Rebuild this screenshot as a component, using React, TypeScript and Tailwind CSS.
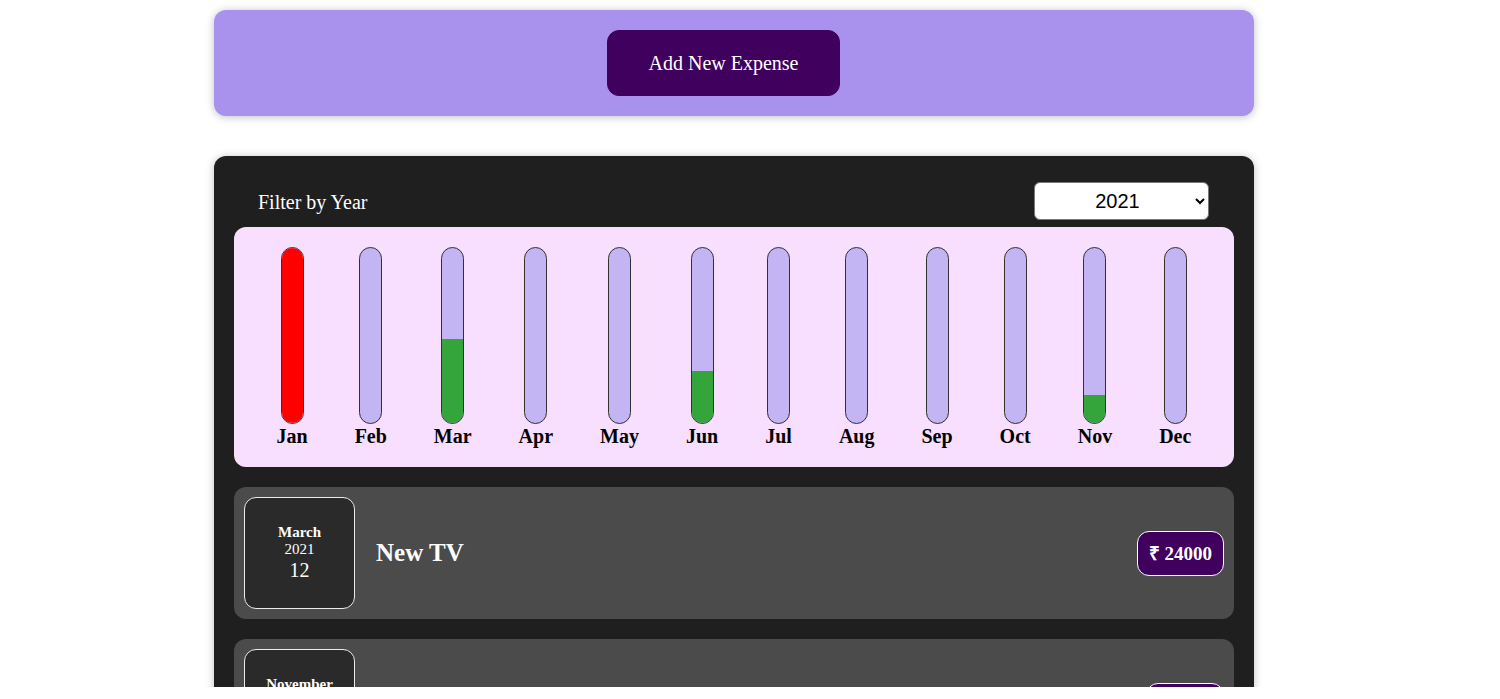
import React from 'react';

type Expense = {
  id: string;
  title: string;
  amount: number;
  month: string;
  year: number;
  day: string;
};

const MONTHS: { label: string; pct: number; over?: boolean }[] = [
  { label: 'Jan', pct: 100, over: true },
  { label: 'Feb', pct: 0 },
  { label: 'Mar', pct: 48 },
  { label: 'Apr', pct: 0 },
  { label: 'May', pct: 0 },
  { label: 'Jun', pct: 30 },
  { label: 'Jul', pct: 0 },
  { label: 'Aug', pct: 0 },
  { label: 'Sep', pct: 0 },
  { label: 'Oct', pct: 0 },
  { label: 'Nov', pct: 16 },
  { label: 'Dec', pct: 0 },
];

const EXPENSES: Expense[] = [
  { id: 'e1', title: 'New TV', amount: 24000, month: 'March', year: 2021, day: '12' },
  { id: 'e2', title: 'New Phone', amount: 8000, month: 'November', year: 2021, day: '05' },
];

function ChartBar({ label, pct, over }: { label: string; pct: number; over?: boolean }) {
  return (
    <div className="flex flex-col items-center">
      <div className="flex h-[177px] w-[23px] flex-col justify-end overflow-hidden rounded-[12px] border border-[#313131] bg-[#c3b4f3]">
        <div
          className={over ? 'w-full bg-[#ff0000]' : 'w-full bg-[#33a53a]'}
          style={{ height: `${pct}%` }}
        />
      </div>
      <span className="mt-[1px] text-[20px] font-bold leading-[22px] text-black">{label}</span>
    </div>
  );
}

function ExpenseItem({ e }: { e: Expense }) {
  return (
    <div className="flex items-center rounded-[12px] bg-[#4b4b4b] p-[10px]">
      <div className="flex h-[112px] w-[111px] shrink-0 flex-col items-center justify-center rounded-[12px] border border-[#ececec] bg-[#2a2a2a] text-white">
        <span className="text-[15px] font-bold leading-[17px]">{e.month}</span>
        <span className="text-[15px] leading-[17px]">{e.year}</span>
        <span className="text-[20px] leading-[24px]">{e.day}</span>
      </div>
      <div className="flex flex-1 items-center justify-between pl-[21px]">
        <h2 className="text-[25px] font-bold text-white">{e.title}</h2>
        <div className="rounded-[12px] border border-white bg-[#40005d] px-[11px] py-[10px] text-[19px] font-bold leading-[23px] text-white">
          ₹ {e.amount}
        </div>
      </div>
    </div>
  );
}

export default function App() {
  return (
    <div className="h-[687px] overflow-hidden bg-white font-['Liberation_Serif',serif]">
      <div className="ml-[214px] w-[1040px] pt-[10px]">
        <div className="flex h-[106px] items-center justify-center rounded-[12px] bg-[#a892ee] shadow-[0_1px_8px_rgba(0,0,0,0.25)]">
          <button
            type="button"
            className="mr-[21px] h-[66px] w-[233px] rounded-[12px] border border-[#40005d] bg-[#40005d] text-[20px] text-white"
          >
            Add New Expense
          </button>
        </div>

        <div className="mt-[40px] rounded-[12px] bg-[#1f1f1f] px-[20px] pt-[26px] shadow-[0_1px_8px_rgba(0,0,0,0.25)]">
          <div className="flex items-center justify-between pl-[24px] pr-[25px]">
            <label className="mt-[1px] text-[20px] text-white">Filter by Year</label>
            <select
              defaultValue="2021"
              className="h-[38px] w-[175px] rounded-[6px] border border-[#767676] bg-white pl-[10px] pr-[6px] text-center font-['Liberation_Sans',Arial,sans-serif] text-[20px] text-black"
            >
              <option value="2022">2022</option>
              <option value="2021">2021</option>
              <option value="2020">2020</option>
              <option value="2019">2019</option>
            </select>
          </div>

          <div className="mt-[7px] flex h-[240px] justify-around rounded-[12px] bg-[#f8dfff] px-[19px] pt-[20px]">
            {MONTHS.map((m) => (
              <ChartBar key={m.label} label={m.label} pct={m.pct} over={m.over} />
            ))}
          </div>

          <div className="flex flex-col gap-[20px] pt-[20px]">
            {EXPENSES.map((e) => (
              <ExpenseItem key={e.id} e={e} />
            ))}
          </div>
        </div>
      </div>
    </div>
  );
}
